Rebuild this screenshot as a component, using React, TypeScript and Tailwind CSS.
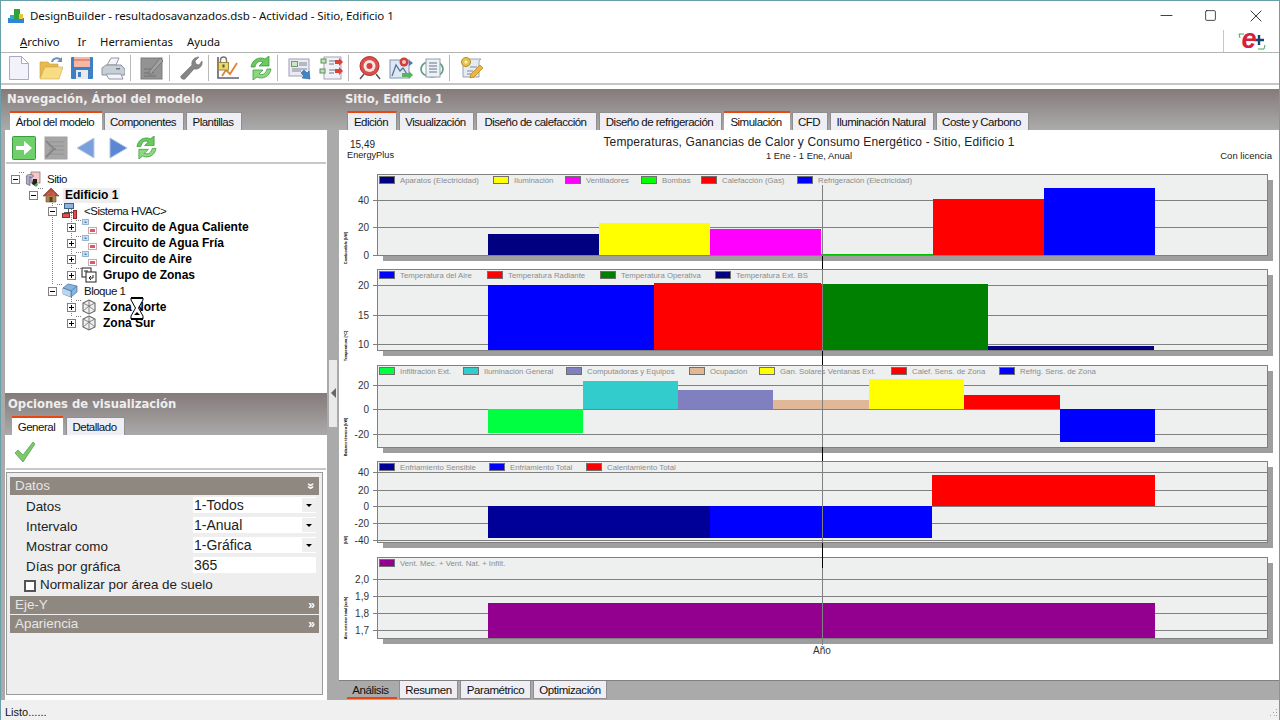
import { Minus, Square, X } from "lucide-react";

const sans = "[font-family:'Liberation_Sans',sans-serif]";

type Bar = { x: number; w: number; y: number; h: number; c: string };
type Legend = { x: number; c: string; label: string };
type Tick = { y: number; label: string };
type Chart = {
  top: number;
  bottom: number;
  legend: Legend[];
  ticks: Tick[];
  bars: Bar[];
  unit: string;
  unitY: number;
};

const charts: Chart[] = [
  {
    top: 174,
    bottom: 255,
    unit: "Combustible [kW]",
    unitY: 240,
    legend: [
      { x: 379, c: "#000080", label: "Aparatos (Electricidad)" },
      { x: 493, c: "#ffff00", label: "Iluminación" },
      { x: 565, c: "#ff00ff", label: "Ventiladores" },
      { x: 641, c: "#00ff00", label: "Bombas" },
      { x: 701, c: "#ff0000", label: "Calefacción (Gas)" },
      { x: 797, c: "#0000ff", label: "Refrigeración (Electricidad)" },
    ],
    ticks: [
      { y: 200, label: "40" },
      { y: 227, label: "20" },
      { y: 255, label: "0" },
    ],
    bars: [
      { x: 488, w: 111, y: 234, h: 21, c: "#000080" },
      { x: 599, w: 111, y: 223, h: 32, c: "#ffff00" },
      { x: 710, w: 111, y: 229, h: 26, c: "#ff00ff" },
      { x: 821, w: 112, y: 254, h: 1, c: "#00c000" },
      { x: 933, w: 111, y: 199, h: 56, c: "#ff0000" },
      { x: 1044, w: 111, y: 188, h: 67, c: "#0000ff" },
    ],
  },
  {
    top: 269,
    bottom: 350,
    unit: "Temperatura [°C]",
    unitY: 338,
    legend: [
      { x: 379, c: "#0000ff", label: "Temperatura del Aire" },
      { x: 487, c: "#ff0000", label: "Temperatura Radiante" },
      { x: 600, c: "#008000", label: "Temperatura Operativa" },
      { x: 715, c: "#000080", label: "Temperatura Ext. BS" },
    ],
    ticks: [
      { y: 285, label: "20" },
      { y: 315, label: "15" },
      { y: 344, label: "10" },
    ],
    bars: [
      { x: 488, w: 166, y: 285, h: 65, c: "#0000ff" },
      { x: 654, w: 167, y: 283, h: 67, c: "#ff0000" },
      { x: 821, w: 167, y: 284, h: 66, c: "#008000" },
      { x: 988, w: 166, y: 346, h: 4, c: "#000080" },
    ],
  },
  {
    top: 365,
    bottom: 447,
    unit: "Balance térmico [kW]",
    unitY: 429,
    legend: [
      { x: 379, c: "#00ff40", label: "Infiltración Ext." },
      { x: 463, c: "#33cccc", label: "Iluminación General" },
      { x: 566, c: "#8080c0", label: "Computadoras y Equipos" },
      { x: 689, c: "#e0b898", label: "Ocupación" },
      { x: 759, c: "#ffff00", label: "Gan. Solares Ventanas Ext." },
      { x: 891, c: "#ff0000", label: "Calef. Sens. de Zona" },
      { x: 999, c: "#0000ff", label: "Refrig. Sens. de Zona" },
    ],
    ticks: [
      { y: 385, label: "20" },
      { y: 409, label: "0" },
      { y: 434, label: "-20" },
    ],
    bars: [
      { x: 488, w: 95, y: 409, h: 24, c: "#00ff40" },
      { x: 583, w: 95, y: 381, h: 28, c: "#33cccc" },
      { x: 678, w: 95, y: 390, h: 19, c: "#8080c0" },
      { x: 773, w: 96, y: 400, h: 9, c: "#e0b898" },
      { x: 869, w: 95, y: 379, h: 30, c: "#ffff00" },
      { x: 964, w: 96, y: 395, h: 14, c: "#ff0000" },
      { x: 1060, w: 95, y: 409, h: 33, c: "#0000ff" },
    ],
  },
  {
    top: 461,
    bottom: 542,
    unit: "[kW]",
    unitY: 532,
    legend: [
      { x: 379, c: "#000099", label: "Enfriamiento Sensible" },
      { x: 489, c: "#0000ff", label: "Enfriamiento Total" },
      { x: 586, c: "#ff0000", label: "Calentamiento Total" },
    ],
    ticks: [
      { y: 472, label: "40" },
      { y: 490, label: "20" },
      { y: 506, label: "0" },
      { y: 523, label: "-20" },
      { y: 540, label: "-40" },
    ],
    bars: [
      { x: 488, w: 222, y: 506, h: 32, c: "#000099" },
      { x: 710, w: 222, y: 506, h: 32, c: "#0000ff" },
      { x: 932, w: 223, y: 475, h: 31, c: "#ff0000" },
    ],
  },
  {
    top: 557,
    bottom: 638,
    unit: "Aire exterior total [ac/h]",
    unitY: 610,
    legend: [{ x: 379, c: "#930090", label: "Vent. Mec. + Vent. Nat. + Infilt." }],
    ticks: [
      { y: 579, label: "2,0" },
      { y: 596, label: "1,9" },
      { y: 613, label: "1,8" },
      { y: 630, label: "1,7" },
    ],
    bars: [{ x: 488, w: 667, y: 603, h: 35, c: "#930090" }],
  },
];

function Charts() {
  return (
    <svg
      viewBox="339 165 940 495"
      className="h-[495px] w-[940px] shrink-0"
      style={{ fontFamily: "'Liberation Sans', sans-serif" }}
    >
      {charts.map((c) => (
        <g key={c.top}>
          <rect x={383} y={c.top + 6} width={890} height={c.bottom - c.top} fill="#9e9e9e" shapeRendering="crispEdges" />
          <rect x={377.5} y={c.top + 0.5} width={890} height={c.bottom - c.top} fill="#eeefef" stroke="#808080" shapeRendering="crispEdges" />
          {c.ticks.map((t) => (
            <g key={t.y}>
              <line x1={373} x2={1267} y1={t.y + 0.5} y2={t.y + 0.5} stroke="#808080" shapeRendering="crispEdges" />
              <text x={369} y={t.y + 4} textAnchor="end" fontSize={10} fill="#333">
                {t.label}
              </text>
            </g>
          ))}
          {c.bars.map((b) => (
            <rect key={b.x} x={b.x} y={b.y} width={b.w} height={b.h} fill={b.c} shapeRendering="crispEdges" />
          ))}
          {c.legend.map((l) => (
            <g key={l.x}>
              <rect x={l.x + 0.5} y={c.top + 2.5} width={15} height={7} fill={l.c} stroke="#707070" shapeRendering="crispEdges" />
              <text x={l.x + 21} y={c.top + 9} fontSize={7.8} fill="#8c8c8c">
                {l.label}
              </text>
            </g>
          ))}
          <text
            transform={`translate(346.5 ${c.unitY + 8}) rotate(-90)`}
            fontSize={3.8}
            fontWeight="bold"
            textAnchor="middle"
            fill="#000"
          >
            {c.unit}
          </text>
        </g>
      ))}
      <line x1={822.5} x2={822.5} y1={185} y2={645} stroke="#808080" shapeRendering="crispEdges" />
      {[
        [256, 269],
        [351, 365],
        [447, 461],
        [543, 568],
      ].map(([a, b]) => (
        <line key={a} x1={822.5} x2={822.5} y1={a} y2={b} stroke="#000" shapeRendering="crispEdges" />
      ))}
      <text x={822} y={654} textAnchor="middle" fontSize={10} fill="#333">
        Año
      </text>
    </svg>
  );
}

const tabBase =
  "flex shrink-0 items-center justify-center whitespace-nowrap pr-[2px] pt-[2px] text-[11.5px] tracking-[-0.5px] text-[#111]";

function Tab({ label, w, active, marked }: { label: string; w: number; active?: boolean; marked?: boolean }) {
  return (
    <div
      style={{ width: w }}
      className={
        active
          ? `${tabBase} h-[19px] border-t-2 border-[#e8470f] bg-white`
          : marked
            ? `${tabBase} h-[19px] border-x border-t-2 border-x-[#8f8f8f] border-t-[#e8470f] bg-[#eeeef4]`
            : `${tabBase} h-[18px] border border-b-0 border-[#8f8f8f] bg-[#eeeef4]`
      }
    >
      {label}
    </div>
  );
}

function Ico({ x = 24, y = 24, children }: { x?: number; y?: number; children: React.ReactNode }) {
  return (
    <svg viewBox={`0 0 ${x} ${y}`} width={x} height={y} className="block shrink-0">
      {children}
    </svg>
  );
}

const NewDoc = () => (
  <Ico>
    <path d="M1.5 .5h12l7 7v16h-19z" fill="#f2f2fb" stroke="#a9a9c8" />
    <path d="M13.5 .5v7h7z" fill="#fff" stroke="#a9a9c8" />
  </Ico>
);
const OpenFolder = () => (
  <Ico>
    <path d="M1 6h8l2 2h8v3H6L1 22z" fill="#e9b94d" stroke="#c99a3a" strokeWidth=".6" />
    <path d="M6 11h18l-4 12H1z" fill="#f8dc83" stroke="#d5a94a" strokeWidth=".6" />
    <path d="M13 6c1-4 6-5 9-2" fill="none" stroke="#6d8fb5" strokeWidth="2" />
    <path d="M23 1v5h-5z" fill="#6d8fb5" />
  </Ico>
);
const Save = () => (
  <Ico>
    <rect x="1" y="1" width="22" height="22" rx="1" fill="#3f7fc4" />
    <rect x="4" y="1" width="16" height="10" fill="#f4b8a8" />
    <rect x="4" y="3" width="16" height="2" fill="#e9896e" />
    <rect x="6" y="14" width="12" height="9" fill="#e8e8f0" />
    <rect x="8" y="16" width="3" height="5" fill="#3f7fc4" />
  </Ico>
);
const Printer = () => (
  <Ico>
    <path d="M6 9l4-7h8l-3 7z" fill="#f4f4f8" stroke="#9098a4" />
    <path d="M1 12l4-3h15l4 4v6H1z" fill="#c8ced6" stroke="#8a929e" />
    <path d="M5 18h15l2 5H8z" fill="#f4f4f8" stroke="#9098a4" />
    <rect x="15" y="12" width="4" height="1.5" fill="#6f7782" />
  </Ico>
);
const GrayEdit = () => (
  <Ico>
    <rect x="1" y="2" width="21" height="21" fill="#939393" stroke="#7d7d7d" />
    <path d="M4 17h10M4 13h8M4 20h12" stroke="#707070" />
    <path d="M9 16L20 2l3 3-13 14z" fill="#a2a2a2" stroke="#767676" />
  </Ico>
);
const Wrench = () => (
  <Ico>
    <path d="M2 20L13 9c-1-4 2-8 7-8l-4 4 1 3 3 1 3-4c1 5-3 9-8 8L6 23c-2 1-5-1-4-3z" fill="#858585" stroke="#6d6d6d" strokeWidth=".6" />
  </Ico>
);
const LockChart = () => (
  <Ico>
    <path d="M2 1v21h21" fill="none" stroke="#60607a" strokeWidth="1.6" />
    <path d="M6 20l4-6 4 4 7-11" fill="none" stroke="#e98030" strokeWidth="1.8" />
    <path d="M4.5 7V4a3 3 0 0 1 6 0v3" fill="none" stroke="#777" strokeWidth="1.4" />
    <rect x="2.5" y="6.5" width="10" height="7.5" fill="#ecd76a" stroke="#9c8c3c" />
    <rect x="6.5" y="8.5" width="2" height="3" fill="#555" />
  </Ico>
);
const Refresh = ({ size = 22 }: { size?: number }) => (
  <svg viewBox="0 0 22 24" width={size} height={(size * 24) / 22} className="block shrink-0">
    <path d="M1 11C2 4 9 0 15 3l4-3v10H9l4-4C9 4 6 7 5 11z" fill="#6bc95e" stroke="#2f8f3a" strokeWidth=".7" />
    <path d="M21 13c-1 7-8 11-14 8l-4 3V14h10l-4 4c4 2 7-1 8-5z" fill="#8bd97a" stroke="#2f8f3a" strokeWidth=".7" />
  </svg>
);
const FormArrow = () => (
  <Ico>
    <rect x="1" y="3" width="20" height="17" fill="#e9eaf3" stroke="#9aa0b4" />
    <rect x="3.5" y="5.5" width="6" height="5" fill="#cfe6c4" stroke="#6e9a6a" />
    <path d="M11 7h8M11 9h8M4 13h15M4 15h9" stroke="#7f8596" />
    <path d="M22 23l-8-1 2-2-3-3 3-3 3 3 2-2z" fill="#3f86c9" stroke="#2b6296" strokeWidth=".6" />
  </Ico>
);
const ListArrows = () => (
  <Ico>
    <rect x="5" y="1" width="17" height="22" fill="#f1f1f7" stroke="#a2a6b6" />
    <path d="M10 5h6M10 8h5M10 14h6M10 17h5" stroke="#6e7484" />
    <rect x="2" y="3" width="5" height="4" fill="#bfe0b0" stroke="#5f9158" />
    <rect x="1" y="13" width="5" height="4" fill="#bfe0b0" stroke="#5f9158" />
    <path d="M16 4h4V2l4 4-4 4V8h-4zM16 13h4v-2l4 4-4 4v-2h-4z" fill="#d8433c" />
  </Ico>
);
const Target = () => (
  <Ico>
    <path d="M6 18l-4 5M18 18l4 5" stroke="#555" strokeWidth="1.5" />
    <circle cx="11.5" cy="10" r="9.5" fill="#df4d4a" stroke="#a83331" />
    <circle cx="11.5" cy="10" r="6" fill="#f6e6e4" />
    <circle cx="11.5" cy="10" r="3" fill="#d83f3c" />
  </Ico>
);
const ChartTarget = () => (
  <Ico>
    <rect x="1" y="4" width="19" height="18" fill="#dfe7f2" stroke="#7f95ae" />
    <path d="M3 20l4-11 4 6 3-3 4 6" fill="none" stroke="#55739a" strokeWidth="1.3" />
    <circle cx="15" cy="6" r="4.5" fill="#cf3f3c" />
    <circle cx="15" cy="6" r="2" fill="#f2c9c0" />
    <path d="M20 4l4 3-4 3z" fill="#3f7cb8" />
    <path d="M13 17h7v-2l4 4-4 4v-2h-7z" fill="#59b45b" />
  </Ico>
);
const ListRing = () => (
  <Ico>
    <ellipse cx="12" cy="13" rx="11" ry="8" fill="none" stroke="#5d9f7e" strokeWidth="1.6" />
    <rect x="6" y="3" width="14" height="18" fill="#eef1f6" stroke="#90a0b0" />
    <path d="M9 7h8M9 10h8M9 13h8M9 16h8" stroke="#65758a" />
  </Ico>
);
const ScriptPencil = () => (
  <Ico>
    <path d="M5 3h17l-2 2v16H4V5z" fill="#e6eaf2" stroke="#96a4b6" />
    <path d="M11 11h7M8 15h6M8 18h5" stroke="#7f8da0" />
    <circle cx="7" cy="6" r="4.5" fill="#e9c14a" stroke="#b08d26" />
    <circle cx="7" cy="6" r="1.6" fill="#fff4c4" />
    <path d="M11 22l1-4L21 9l3 3-9 9z" fill="#f0b63c" stroke="#b07f1e" strokeWidth=".7" />
  </Ico>
);

const Sep = () => <div className="-ml-[2px] mr-[2px] h-[26px] w-px bg-[#b9b9b9]" />;

function Toolbar() {
  return (
    <div className="flex h-[32px] items-center gap-[7px] border-b-2 border-[#c6c6c6] pl-[7px]">
      <NewDoc />
      <OpenFolder />
      <Save />
      <Printer />
      <Sep />
      <GrayEdit />
      <Sep />
      <Wrench />
      <Sep />
      <div className="-ml-[2px] mr-[3px]">
        <LockChart />
      </div>
      <Refresh />
      <Sep />
      <div className="ml-px">
        <FormArrow />
      </div>
      <ListArrows />
      <Sep />
      <Target />
      <ChartTarget />
      <ListRing />
      <Sep />
      <ScriptPencil />
    </div>
  );
}

const SiteIcon = () => (
  <Ico x={16} y={16}>
    <rect x="6" y="1" width="9" height="11" fill="#f6c8c8" stroke="#7a6a6a" strokeWidth=".7" />
    <ellipse cx="5" cy="5" rx="3.6" ry="1.6" fill="#b8b8e8" stroke="#555" strokeWidth=".6" />
    <path d="M1.4 5v8l3.6 1.5V5" fill="#a9a9dc" stroke="#555" strokeWidth=".6" />
    <path d="M8 8h4v4l-2 3-3-2z" fill="#222" />
    <path d="M9 14l3-2 1 2-2 2z" fill="#4fa44f" />
  </Ico>
);
const HouseIcon = () => (
  <Ico x={16} y={16}>
    <path d="M3 8h10v7H3z" fill="#a8864e" stroke="#5f4a2a" strokeWidth=".6" />
    <path d="M0 9L8 1l8 8-2 0-6-5-6 5z" fill="#b8483c" stroke="#7d2a26" strokeWidth=".6" />
    <path d="M4 8l4-4 4 4z" fill="#c8503f" />
    <rect x="6.5" y="10" width="3" height="5" fill="#5a3a20" />
  </Ico>
);
const HvacIcon = () => (
  <Ico x={16} y={16}>
    <rect x="2.5" y="0.5" width="9" height="5" fill="#8cb4dc" stroke="#3d6088" />
    <path d="M6.5 6v5M2 9.5h12" stroke="#333" strokeWidth=".8" />
    <rect x="0.5" y="10.5" width="7" height="4" fill="#e05050" stroke="#8f2a2a" />
    <rect x="11.5" y="7.5" width="3" height="8" fill="#e05050" stroke="#8f2a2a" />
  </Ico>
);
const CircuitIcon = () => (
  <Ico x={16} y={16}>
    <rect x="1.5" y="0.5" width="6" height="5" fill="#cfe0f0" stroke="#4a7aa8" strokeDasharray="1 1" />
    <rect x="3.5" y="2.5" width="2" height="1.5" fill="#4a7aa8" />
    <rect x="7.5" y="8.5" width="8" height="6" fill="#fff" stroke="#a05058" strokeDasharray="1 1" />
    <rect x="9" y="10" width="5" height="3" fill="#e0566a" />
  </Ico>
);
const GroupIcon = () => (
  <Ico x={16} y={16}>
    <rect x="1" y="1" width="9" height="9" fill="#fff" stroke="#222" />
    <rect x="3" y="3.5" width="4" height="1" fill="#222" />
    <rect x="5" y="5" width="10" height="10" fill="#fff" stroke="#222" />
    <path d="M12 8v3H8m2-2l-2 2 2 2" fill="none" stroke="#222" />
  </Ico>
);
const BlockIcon = () => (
  <Ico x={16} y={16}>
    <path d="M1 5l5-4 9 2v6l-6 5-8-3z" fill="#86b6e0" stroke="#456f98" strokeWidth=".7" />
    <path d="M1 5l8 3 6-5M9 8v6" fill="none" stroke="#456f98" strokeWidth=".7" />
    <path d="M1 5l8 3v6l-8-3z" fill="#b8d6ee" />
    <path d="M1 5l8 3v6" fill="none" stroke="#456f98" strokeWidth=".7" />
  </Ico>
);
const ZoneIcon = () => (
  <Ico x={16} y={16}>
    <path d="M8 1l6 3v8l-6 3-6-3V4z" fill="#f0f0f0" stroke="#666" strokeWidth="1.1" />
    <path d="M2 4l6 3 6-3M8 7v8M2 12l6-5 6 5M8 1v6" fill="none" stroke="#777" strokeWidth=".9" />
  </Ico>
);

type Node = { level: number; label: string; icon: React.ReactNode; bold?: boolean; open?: boolean; selected?: boolean };

const nodes: Node[] = [
  { level: 0, label: "Sitio", icon: <SiteIcon />, open: true },
  { level: 1, label: "Edificio 1", icon: <HouseIcon />, open: true, bold: true, selected: true },
  { level: 2, label: "<Sistema HVAC>", icon: <HvacIcon />, open: true },
  { level: 3, label: "Circuito de Agua Caliente", icon: <CircuitIcon />, bold: true },
  { level: 3, label: "Circuito de Agua Fría", icon: <CircuitIcon />, bold: true },
  { level: 3, label: "Circuito de Aire", icon: <CircuitIcon />, bold: true },
  { level: 3, label: "Grupo de Zonas", icon: <GroupIcon />, bold: true },
  { level: 2, label: "Bloque 1", icon: <BlockIcon />, open: true },
  { level: 3, label: "Zona Norte", icon: <ZoneIcon />, bold: true },
  { level: 3, label: "Zona Sur", icon: <ZoneIcon />, bold: true },
];

const pad: Record<number, string> = { 0: "pl-[6px]", 1: "pl-[24px]", 2: "pl-[43px]", 3: "pl-[62px]" };

function TreeGuides() {
  return (
    <svg className="absolute left-0 top-0" width={322} height={180} viewBox="5 171 322 180">
      <g stroke="#808080" strokeDasharray="1 1" fill="none" shapeRendering="crispEdges">
        <path d="M33.5 184v6M52.5 200v91M71.5 216v59M71.5 296v27" />
        <path d="M19 179.5h6M38 195.5h6M57 211.5h6M57 291.5h6" />
        <path d="M76 227.5h6M76 243.5h6M76 259.5h6M76 275.5h6M76 307.5h6M76 323.5h6" />
      </g>
    </svg>
  );
}

function TreeRow({ n }: { n: Node }) {
  let text = "ml-[6px] whitespace-nowrap pt-[2px] text-[11.5px] tracking-[-0.5px] text-[#111]";
  if (n.bold) text = "ml-[6px] whitespace-nowrap text-[12px] font-bold text-black";
  if (n.selected) text = "ml-[4px] whitespace-nowrap bg-[#eeeeee] px-[2px] text-[12px] font-bold leading-[15px] text-black";
  return (
    <div className={`relative flex h-4 items-center ${pad[n.level]}`}>
      <div className="relative flex size-[9px] shrink-0 items-center justify-center border border-[#7f7f7f] bg-white">
        <div className="h-px w-[5px] bg-black" />
        {!n.open && <div className="absolute h-[5px] w-px bg-black" />}
      </div>
      <div className="ml-[5px]">{n.icon}</div>
      <span className={text}>{n.label}</span>
    </div>
  );
}

function Hourglass() {
  return (
    <svg className="absolute left-[125px] top-[133px]" width={14} height={23} viewBox="0 0 14 23">
      <path d="M1 1h12v2L8.5 11 13 19v3H1v-3l4.5-8L1 3z" fill="#fff" stroke="#000" />
      <path d="M1 1h12M1 22h12" stroke="#000" strokeWidth="2" />
      <path d="M4 18l3-3 3 3z" fill="#000" />
    </svg>
  );
}

function Field({ label, value, drop = true }: { label: string; value: string; drop?: boolean }) {
  return (
    <div className="flex h-5 items-center">
      <div className="w-[183px] whitespace-nowrap pl-[16px] pt-[4px] text-[13.4px] text-[#222]">{label}</div>
      <div className="flex h-[16px] w-[123px] items-center bg-white pl-[1px] text-[14px] text-[#222]">
        <span className="flex-1 leading-none">{value}</span>
        {drop && (
          <div className="flex h-[14px] w-[14px] items-center justify-center bg-[#efefef]">
            <div className="border-x-[3px] border-t-[3px] border-x-transparent border-t-black" />
          </div>
        )}
      </div>
    </div>
  );
}

function Section({ label, open }: { label: string; open?: boolean }) {
  return (
    <div className="flex h-[18px] items-center justify-between bg-[#8f8880] pl-[5px] pr-[4px] text-[13.4px] text-[#e6e6e6]">
      <span>{label}</span>
      <span className={open ? "rotate-90 text-[12px] font-bold leading-none text-white" : "text-[12px] font-bold leading-none text-white"}>»</span>
    </div>
  );
}

function LeftPanel() {
  return (
    <div className="flex h-full w-[326px] shrink-0 flex-col">
      <div className="h-[22px] pl-[6px] pt-[2px] text-[11.6px] font-bold text-[#eeeeee] [font-family:'DejaVu_Sans',sans-serif]">
        Navegación, Árbol del modelo
      </div>
      <div className="flex h-[19px] items-end gap-[2px] pl-[9px]">
        <Tab label="Árbol del modelo" w={92} active />
        <Tab label="Componentes" w={80} />
        <Tab label="Plantillas" w={56} />
      </div>
      <div className="ml-[4px] flex h-[263px] flex-col bg-white">
        <div className="mx-px flex h-[34px] items-center gap-[8px] border-b-2 border-[#c8c8c8] pl-[6px] pt-[3px]">
          <svg width={24} height={24} viewBox="0 0 24 24" className="block shrink-0">
            <rect x="0.5" y="0.5" width="23" height="23" rx="1" fill="#6fcf6a" stroke="#3b9a3e" />
            <path d="M4 10h8V5l8 7-8 7v-5H4z" fill="#fff" />
          </svg>
          <svg width={24} height={24} viewBox="0 0 24 24" className="block shrink-0">
            <rect x="1" y="1" width="22" height="22" fill="#a6a6a6" stroke="#a0a0a0" />
            <path d="M5 6h15M5 10h15M5 14h15M5 18h15" stroke="#929292" />
            <path d="M2 5l8 8-8 8M10 13h2" stroke="#868686" strokeWidth="2" fill="none" />
          </svg>
          <svg width={20} height={22} viewBox="0 0 20 22" className="block shrink-0">
            <path d="M18 1v20L1 11z" fill="#7aa0dc" stroke="#b8cbe8" />
          </svg>
          <svg width={20} height={22} viewBox="0 0 20 22" className="ml-[4px] block shrink-0">
            <path d="M2 1v20l17-10z" fill="#5c86d2" stroke="#a8c0e6" />
          </svg>
          <Refresh size={21} />
        </div>
        <div className="relative flex-1 pt-[7px]">
          <TreeGuides />
          {nodes.map((n) => (
            <TreeRow key={n.label} n={n} />
          ))}
          <Hourglass />
        </div>
      </div>
      <div className="ml-[4px] flex h-[42px] flex-col justify-between bg-[linear-gradient(#857a7a,#aaaaaa)]">
        <div className="pl-[3px] pt-[3px] text-[11.6px] font-bold text-[#eeeeee] [font-family:'DejaVu_Sans',sans-serif]">
          Opciones de visualización
        </div>
        <div className="flex items-end gap-[3px] pl-[7px]">
          <Tab label="General" w={51} active />
          <Tab label="Detallado" w={59} />
        </div>
      </div>
      <div className="ml-[4px] flex flex-1 flex-col bg-white">
        <div className="mx-px flex h-[35px] items-center border-b-2 border-[#c8c8c8] pl-[8px]">
          <svg width={22} height={22} viewBox="0 0 22 22" className="block shrink-0">
            <path d="M1 12l3-3 5 5L19 1l2 2L9 21z" fill="#7fc76b" stroke="#4c9a4a" strokeWidth=".7" />
          </svg>
        </div>
        <div className="mb-[5px] ml-px mr-[4px] mt-[2px] flex-1 border border-[#9a9a9a] bg-[#eeeeee] px-[3px] pt-[4px]">
          <Section label="Datos" open />
          <Field label="Datos" value="1-Todos" />
          <Field label="Intervalo" value="1-Anual" />
          <Field label="Mostrar como" value="1-Gráfica" />
          <Field label="Días por gráfica" value="365" drop={false} />
          <div className="flex h-[21px] items-center gap-[4px] pl-[14px] text-[13.4px] text-[#222]">
            <div className="size-[12px] border-2 border-[#555] bg-white" />
            Normalizar por área de suelo
          </div>
          <Section label="Eje-Y" />
          <div className="h-px" />
          <Section label="Apariencia" />
        </div>
      </div>
    </div>
  );
}

function Splitter() {
  return (
    <div className="flex w-[12px] shrink-0 flex-col pl-[2px] pt-[271px]">
      <div className="flex h-[67px] w-[8px] items-end justify-center bg-[#e9e9e9] pb-[29px]">
        <div className="border-y-[5px] border-r-[5px] border-y-transparent border-r-[#666]" />
      </div>
    </div>
  );
}

const bottomTab =
  "flex h-[18px] items-center justify-center border border-t-0 border-[#8f8f8f] bg-[#eeeef4] pt-[3px] text-[11.5px] tracking-[-0.4px] text-[#111]";

function RightPanel() {
  return (
    <div className="flex h-full min-w-0 flex-1 flex-col">
      <div className="h-[22px] pl-[6px] pt-[2px] text-[11.6px] font-bold text-[#eeeeee] [font-family:'DejaVu_Sans',sans-serif]">
        Sitio, Edificio 1
      </div>
      <div className="flex h-[19px] items-end gap-[2px] pl-[8px]">
        <Tab label="Edición" w={50} marked />
        <Tab label="Visualización" w={75} />
        <Tab label="Diseño de calefacción" w={121} />
        <Tab label="Diseño de refrigeración" w={123} />
        <Tab label="Simulación" w={66} active />
        <Tab label="CFD" w={36} />
        <Tab label="Iluminación Natural" w={104} />
        <Tab label="Coste y Carbono" w={93} />
      </div>
      <div className="flex flex-1 flex-col border-b border-[#808080] bg-white">
        <div className="grid h-[35px] grid-cols-[1fr_auto_1fr] pt-[6px] leading-none">
          <div className="pl-[8px] text-[9.2px] text-[#222]">
            <div className="pl-[3px] pt-[4px] text-[10px]">15,49</div>
            <div className="pt-px">EnergyPlus</div>
          </div>
          <div className="text-center">
            <div className="text-[12px] tracking-[0.15px] text-[#222]">
              Temperaturas, Ganancias de Calor y Consumo Energético - Sitio, Edificio 1
            </div>
            <div className="pt-[3px] text-[9.4px] text-[#222]">1 Ene - 1 Ene, Anual</div>
          </div>
          <div className="pr-[7px] pt-[15px] text-right text-[9.5px] text-[#222]">Con licencia</div>
        </div>
        <Charts />
      </div>
      <div className="flex h-[19px] shrink-0 items-start gap-[2px] bg-[#aaaaaa] pl-[8px]">
        <div className="flex h-[18px] w-[50px] items-center justify-center border-b-2 border-[#e8470f] pr-[3px] pt-[3px] text-[11.5px] tracking-[-0.4px] text-[#111]">
          Análisis
        </div>
        <div className={`${bottomTab} w-[59px]`}>Resumen</div>
        <div className={`${bottomTab} w-[71px]`}>Paramétrico</div>
        <div className={`${bottomTab} w-[74px]`}>Optimización</div>
      </div>
    </div>
  );
}

export default function App() {
  return (
    <div className={`flex h-[720px] w-[1280px] flex-col overflow-hidden border-x border-t border-[#6ba0a8] bg-white ${sans}`}>
      <div className="flex h-[29px] shrink-0 items-center pl-[7px] text-[11.5px] tracking-[-0.08px] text-[#111] [font-family:'Noto_Sans',sans-serif]">
        <svg width={16} height={16} viewBox="0 0 16 16" className="block shrink-0">
          <rect x="0" y="10" width="16" height="5" fill="#2f86d6" />
          <rect x="6" y="1" width="6" height="11" fill="#2fa33a" />
          <rect x="11" y="6" width="4" height="5" fill="#e9c33a" />
          <rect x="2" y="7" width="4" height="4" fill="#36a8c8" />
        </svg>
        <span className="ml-[6px]">DesignBuilder - resultadosavanzados.dsb - Actividad - Sitio, Edificio 1</span>
        <div className="ml-auto flex items-center pr-[13px] text-[#111]">
          <Minus size={19} strokeWidth={1} />
          <Square size={13} strokeWidth={1.4} className="ml-[28px]" />
          <X size={20} strokeWidth={1} className="ml-[29px]" />
        </div>
      </div>
      <div className="flex h-[23px] shrink-0 items-center border-b border-[#b4b4b4] pl-[19px] text-[11.3px] text-[#111] [font-family:'Noto_Sans',sans-serif]">
        <span className="pt-[2px]">
          <u>A</u>rchivo
        </span>
        <span className="ml-[18px] pt-[2px]">Ir</span>
        <span className="ml-[14px] pt-[2px]">Herramientas</span>
        <span className="ml-[14px] pt-[2px]">Ayuda</span>
        <div className="ml-auto flex h-full w-[56px] items-center justify-center border-l border-[#c8c8c8]">
          <div className="relative h-[20px] w-[30px]">
            <svg width={30} height={20} viewBox="0 0 30 20" className="absolute left-0 top-0">
              <path d="M7 3H2l1 4M21 18h6l1-4" fill="none" stroke="#3fa85c" strokeWidth="1" />
              <path d="M17 9h10M22 4v10" stroke="#15456e" strokeWidth="2.4" />
            </svg>
            <span className="absolute left-[5px] top-[-2px] text-[27px] font-bold italic leading-[20px] text-[#d81f3c] [font-family:'Liberation_Sans',sans-serif]">
              e
            </span>
          </div>
        </div>
      </div>
      <Toolbar />
      <div className="h-[4px] shrink-0" />
      <div className="flex min-h-0 flex-1 bg-[#aaaaaa] bg-[linear-gradient(#857a7a,#aaaaaa_40px,#aaaaaa)]">
        <LeftPanel />
        <Splitter />
        <RightPanel />
      </div>
      <div className="flex h-[20px] shrink-0 items-center justify-between bg-[#f0f0f0] pl-[4px] pt-[4px] text-[11px] text-[#111]">
        <span>Listo......</span>
        <svg width={10} height={10} viewBox="0 0 10 10" className="mr-[1px] block">
          <path d="M8 2h1v1H8zM5 5h1v1H5zM8 5h1v1H8zM2 8h1v1H2zM5 8h1v1H8zM8 8h1v1H8z" fill="#a0a0a0" />
        </svg>
      </div>
    </div>
  );
}
